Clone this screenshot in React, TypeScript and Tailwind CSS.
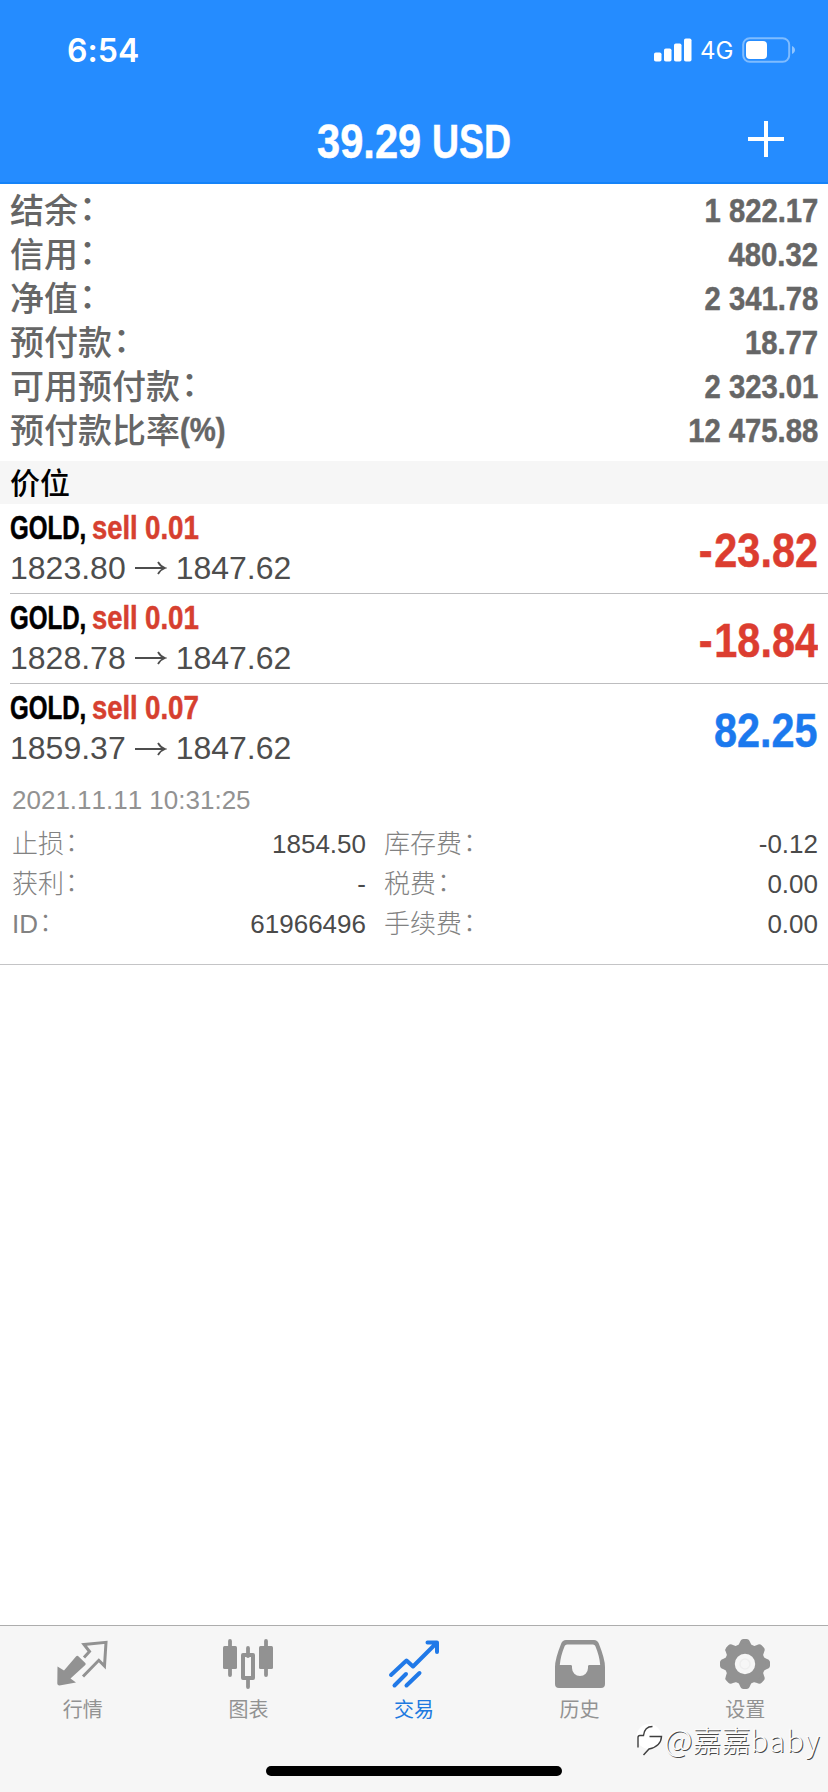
import type { ReactNode } from "react";

const condensed =
  "inline-block font-['Liberation_Sans',sans-serif] font-bold whitespace-nowrap [font-kerning:none] [-webkit-text-stroke:0.5px_currentColor]";
const regular = "font-['Liberation_Sans','Noto_Sans_CJK_SC',sans-serif] [font-kerning:none]";
const cjk = "font-['Noto_Sans_CJK_SC',sans-serif]";

const summary = [
  { label: "结余", suffix: "：", value: "1 822.17" },
  { label: "信用", suffix: "：", value: "480.32" },
  { label: "净值", suffix: "：", value: "2 341.78" },
  { label: "预付款", suffix: "：", value: "18.77" },
  { label: "可用预付款", suffix: "：", value: "2 323.01" },
  { label: "预付款比率", suffix: "(%)", value: "12 475.88" },
];

const positions = [
  { volume: "0.01", open: "1823.80", current: "1847.62", profit: "-23.82" },
  { volume: "0.01", open: "1828.78", current: "1847.62", profit: "-18.84" },
  { volume: "0.07", open: "1859.37", current: "1847.62", profit: "82.25" },
];

const details = [
  ["止损", "1854.50", "库存费", "-0.12"],
  ["获利", "-", "税费", "0.00"],
  ["ID", "61966496", "手续费", "0.00"],
];

function StatusBar() {
  return (
    <div className="flex h-[100px] items-center justify-between pr-[32px] pl-[67px] text-white">
      <span className="pt-[1px] font-['Inter',sans-serif] text-[32px] leading-[36px] font-semibold tracking-[0.1px]">
        6:54
      </span>
      <div className="flex items-center">
        <svg width="38" height="24" viewBox="0 0 38 24" fill="white">
          <rect x="0" y="14.5" width="7.5" height="9" rx="1.8" />
          <rect x="10" y="10.5" width="7.5" height="13" rx="1.8" />
          <rect x="20" y="5.5" width="7.5" height="18" rx="1.8" />
          <rect x="30" y="0.5" width="7.5" height="23" rx="1.8" />
        </svg>
        <span className="ml-[8px] w-[42px] pt-[2px] font-['Inter',sans-serif] text-[24px] leading-[24px]">
          4G
        </span>
        <svg width="54" height="26" viewBox="0 0 54 26">
          <rect x="1.2" y="1.2" width="46" height="23.6" rx="6.5" fill="none" stroke="#7fbcff" strokeWidth="2" />
          <rect x="4" y="4" width="21" height="18" rx="4" fill="white" />
          <path d="M50 9c4 1.500 4 6.500 0 8z" fill="#8fc4ff" />
        </svg>
      </div>
    </div>
  );
}

function TitleBar() {
  return (
    <div className="grid h-[84px] grid-cols-[1fr_194px_1fr] items-center border-b-2 border-[#1583f8]">
      <span />
      <h1 className="flex text-[49px] leading-[56px] text-white">
        <span className={`${condensed} w-[115px]`}>
          <span className="inline-block origin-left scale-x-[0.85]">39.29</span>
        </span>
        <span className={`${condensed} w-[79px]`}>
          <span className="inline-block origin-left scale-x-[0.765]">USD</span>
        </span>
      </h1>
      <svg className="mr-[43px] mb-[4px] justify-self-end" width="38" height="38" viewBox="0 0 38 38">
        <path d="M19 1v36M1 19h36" stroke="white" strokeWidth="4" />
      </svg>
    </div>
  );
}

function Arrow() {
  return (
    <svg className="mx-[9px]" width="32" height="16" viewBox="0 0 32 16" fill="none" stroke="#4d4d4d" strokeWidth="1.800">
      <path d="M0 8H29M23 2Q25.500 6.500 30 8Q25.500 9.500 23 14" />
    </svg>
  );
}

function MarketIcon() {
  return (
    <svg width="52" height="52" viewBox="1 0 52 52">
      <path
        d="M1.500 28.500L8 32.500L20 18.500Q21.300 17.200 22.600 18.500L29.300 25Q30.200 26 29.300 27L14.500 40.500L20 44.500L3.500 47.500Q1.300 47.500 1.300 45.500Z"
        fill="#929292"
      />
      <path
        d="M28 19.500L33.500 13.500L28 6.500L50 4.300L48.500 28L42.800 22.300L27 38.500"
        fill="none"
        stroke="#929292"
        strokeWidth="3"
      />
    </svg>
  );
}

function ChartIcon() {
  return (
    <svg width="52" height="52" viewBox="0 0 52 52">
      <path d="M8 3v34M44 3v34M26 10v8M26 41v8" stroke="#929292" strokeWidth="3.800" strokeLinecap="round" />
      <rect x="1" y="8" width="14" height="23" rx="1.5" fill="#929292" />
      <rect x="37" y="8" width="14" height="23" rx="1.5" fill="#929292" />
      <rect x="21" y="17" width="10" height="23" fill="none" stroke="#929292" strokeWidth="4" strokeLinejoin="round" />
    </svg>
  );
}

function TradeIcon() {
  return (
    <svg width="52" height="52" viewBox="0 0 52 52" fill="none" stroke="#2079e8" strokeWidth="4" strokeLinecap="round" strokeLinejoin="round">
      <path d="M3 37L18.500 22.500L25 28.500L48.500 5M39.500 4.500H49V14M6.500 47.500L18 36M18.500 47.500L31.500 35" />
    </svg>
  );
}

function HistoryIcon() {
  return (
    <svg width="52" height="52" viewBox="0 0 52 52">
      <path
        fillRule="evenodd"
        fill="#929292"
        d="M12 2H40Q43.500 2 44.800 5.500Q51 21 51 29V46Q51 50 47 50H5Q1 50 1 46V29Q1 21 7.200 5.500Q8.500 2 12 2ZM13 6.500Q11.300 6.500 10.700 8Q6.500 18 5.800 27H17Q18 27 18 28.500V30A8 8 0 0 0 34 30V28.500Q34 27 35 27H46.200Q45.500 18 41.300 8Q40.700 6.500 39 6.500Z"
      />
    </svg>
  );
}

function SettingsIcon() {
  const teeth = [0, 45, 90, 135, 180, 225, 270, 315];
  return (
    <svg width="52" height="52" viewBox="0 0 52 52">
      {teeth.map((angle) => (
        <path
          key={angle}
          d="M18 9Q20 6.500 21 4Q22 1 24.500 1H27.500Q30 1 31 4Q32 6.500 34 9Z"
          fill="#929292"
          transform={`rotate(${angle} 26 26)`}
        />
      ))}
      <circle cx="26" cy="26" r="15.200" fill="none" stroke="#929292" strokeWidth="10" />
      <circle cx="26" cy="26" r="5" fill="none" stroke="#eeeeee" strokeWidth="1.500" />
    </svg>
  );
}

const tabs: { label: string; icon: ReactNode; active?: boolean }[] = [
  { label: "行情", icon: <MarketIcon /> },
  { label: "图表", icon: <ChartIcon /> },
  { label: "交易", icon: <TradeIcon />, active: true },
  { label: "历史", icon: <HistoryIcon /> },
  { label: "设置", icon: <SettingsIcon /> },
];

function Watermark() {
  return (
    <div className="absolute right-[7px] bottom-[35px] flex items-center">
      <svg width="28" height="36" viewBox="0 0 28 36">
        <circle cx="13" cy="15.500" r="12.500" fill="white" />
        <path
          d="M2 26.500V16.500Q2 14.500 4 14.500H7.500Q8.500 5.500 16.500 5.500M13.500 15.500H25.500Q25 25.500 13 28L7.500 34"
          fill="none"
          stroke="#3f3f3f"
          strokeWidth="1.400"
        />
      </svg>
      <span className={`${cjk} text-[29px] leading-[36px] font-light whitespace-nowrap text-[#fcfcfc] [text-shadow:1px_1px_0_#4a4a4a]`}>
        <span className="text-[31px]">@</span>嘉嘉<span className="tracking-[1.500px]">baby</span>
      </span>
    </div>
  );
}

function DetailCell({ label, value }: { label: string; value: string }) {
  return (
    <div className="flex justify-between">
      <span className="font-light text-[#828282]">
        {label}
        <span className="relative -top-[2px] left-px">：</span>
      </span>
      <span>{value}</span>
    </div>
  );
}

function Profit({ value }: { value: string }) {
  const negative = value.startsWith("-");
  return (
    <span
      className={`${condensed} origin-right scale-x-[0.845] pt-[2px] text-[49px] leading-[50px] ${negative ? "text-[#dc3d30]" : "text-[#1b79ee]"}`}
    >
      {negative && <span className="mr-[2px]">-</span>}
      {value.replace("-", "")}
    </span>
  );
}

export default function App() {
  return (
    <div className="relative flex h-[1792px] w-[828px] flex-col overflow-hidden bg-white">
      <header className="bg-[#258cff]">
        <StatusBar />
        <TitleBar />
      </header>

      <section className="flex h-[276px] flex-col pt-[3px] pr-[10px] pl-[10px] text-[#666666]">
        {summary.map((row) => (
          <div key={row.label} className="flex h-[44px] items-center justify-between">
            <span className="flex items-center whitespace-nowrap">
              <span className={`${cjk} text-[34px] leading-[44px] font-medium`}>{row.label}</span>
              {row.suffix === "：" ? (
                <span className={`${cjk} relative -top-[3px] left-px text-[34px] leading-[44px] font-medium`}>：</span>
              ) : (
                <span className={`${condensed} origin-left scale-x-[0.86] text-[34px] leading-[44px]`}>{row.suffix}</span>
              )}
            </span>
            <span className={`${condensed} origin-right scale-x-[0.86] pt-[2px] text-[34px] leading-[44px]`}>{row.value}</span>
          </div>
        ))}
      </section>

      <div className={`${cjk} mt-px h-[43px] bg-[#f6f6f6] pl-[10px] text-[30px] leading-[40px] font-medium text-black`}>
        价位
      </div>

      <section>
        {positions.map((item, index) => (
          <div key={item.open} className="pl-[10px]">
            <div className={`flex h-[90px] items-center justify-between pr-[10px] ${index < 2 ? "border-b border-[#bdbdbf]" : ""}`}>
              <div className="pb-[2px]">
                <div className="flex h-[41px] text-[33px] leading-[42px] text-black">
                  <span className={`${condensed} w-[82px]`}>
                    <span className="inline-block origin-left scale-x-[0.73]">GOLD,</span>
                  </span>
                  <span className={`${condensed} w-[53px] text-[#d6402f]`}>
                    <span className="inline-block origin-left scale-x-[0.83]">sell</span>
                  </span>
                  <span className={`${condensed} text-[#d6402f]`}>
                    <span className="inline-block origin-left scale-x-[0.84]">{item.volume}</span>
                  </span>
                </div>
                <div className={`${regular} flex h-[41px] items-center text-[32px] leading-[41px] text-[#4d4d4d]`}>
                  {item.open}
                  <Arrow />
                  {item.current}
                </div>
              </div>
              <Profit value={item.profit} />
            </div>
          </div>
        ))}
        <div className={`${regular} h-[191px] border-b border-[#c4c4c6] pr-[10px] pl-[12px] text-[26px]`}>
          <div className="h-[50px] pt-[6px] leading-[40px] text-[#929292]">2021.11.11 10:31:25</div>
          {details.map((row) => (
            <div key={row[0]} className="grid h-[40px] grid-cols-[354px_1fr] gap-x-[18px] leading-[40px] text-[#4a4a4a]">
              <DetailCell label={row[0]} value={row[1]} />
              <DetailCell label={row[2]} value={row[3]} />
            </div>
          ))}
        </div>
      </section>

      <footer className="mt-auto flex h-[167px] flex-col items-center border-t border-[#adadad] bg-[#f6f6f6]">
        <nav className="grid w-full grid-cols-5 pt-[12px]">
          {tabs.map((tab) => (
            <div key={tab.label} className={`flex flex-col items-center ${tab.active ? "text-[#2079e0]" : "text-[#929292]"}`}>
              {tab.icon}
              <span className={`${cjk} mt-[3px] text-[20px] leading-[32px]`}>{tab.label}</span>
            </div>
          ))}
        </nav>
        <div className="mt-auto mb-[16px] h-[10px] w-[296px] rounded-full bg-black" />
      </footer>
      <Watermark />
    </div>
  );
}
